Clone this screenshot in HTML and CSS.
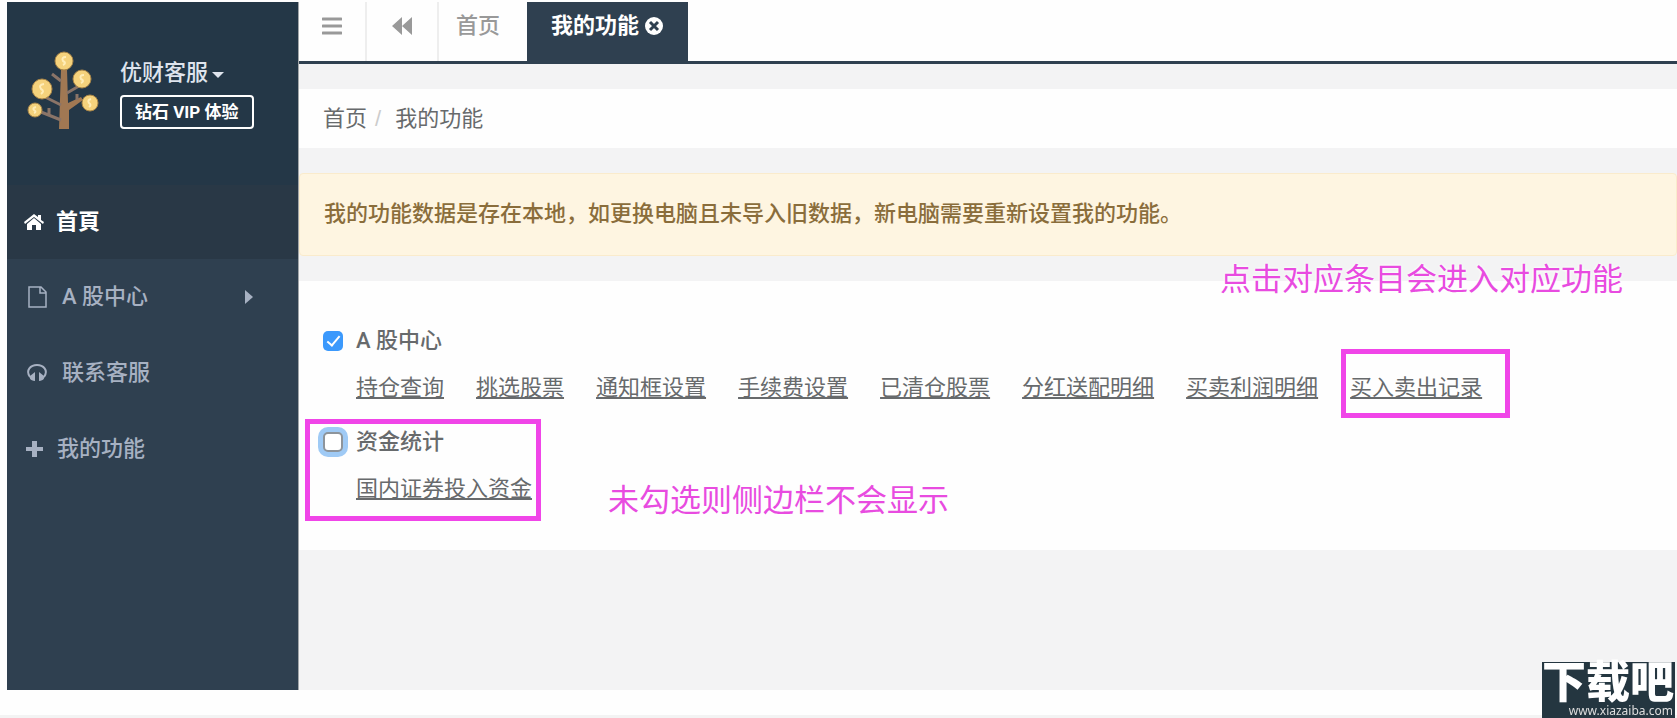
FILE: index.html
```
<!DOCTYPE html>
<html lang="zh-CN">
<head>
	<meta charset="utf-8">
	<title>我的功能</title>
	<link rel="stylesheet" href="styles.css">
</head>
<body>
	<div class="wrapper">
		<aside class="sidebar">
			<div class="profile">
				<svg class="logo" viewBox="0 0 72 80">
					<path d="M32 79 L34 19 H40 L41 53 L54 47 L56 50 L42 60 L42 79 Z" fill="#a17853"/>
					<path d="M34 31 L25 24 M40 43 L52 36 M34 55 L18 47 M34 70 L14 62 M50 50 V44 M22 64 V58" stroke="#8a7468" stroke-width="3" fill="none"/>
					<g fill="#f5d27c" stroke="#a98548" stroke-width="1">
						<circle cx="37" cy="11" r="9"/>
						<circle cx="55" cy="29" r="9"/>
						<circle cx="15" cy="39" r="10"/>
						<circle cx="63" cy="53" r="8"/>
						<circle cx="8" cy="60" r="7"/>
					</g>
					<g stroke="#ffedb8" stroke-width="2" fill="none">
						<path d="M39 7 q-5 0 -3 4 q4 2 0 4"/>
						<path d="M57 25 q-5 0 -3 4 q4 2 0 4"/>
						<path d="M17 34 q-6 1 -3 5 q4 2 0 5"/>
						<path d="M64 49 q-4 1 -2 4 q3 2 0 4"/>
						<path d="M9 57 q-4 1 -2 3 q3 2 0 3"/>
					</g>
				</svg>
				<div class="profile-info">
					<button class="user">优财客服<span class="caret"></span></button>
					<button class="vip">钻石 VIP 体验</button>
				</div>
			</div>
			<nav class="menu">
				<a class="menu-item active" href="#">
					<svg width="20" height="18" viewBox="0 0 20 18"><path d="M10 1 L0 9 L1 11 L10 4 L19 11 L20 9 L17 7 V2 H14 V4 Z M10 5 L3 11 V17 H8 V12 H12 V17 H17 V11 Z" fill="currentColor"/></svg>
					首頁
				</a>
				<a class="menu-item" href="#">
					<svg width="26" height="24" viewBox="0 0 26 24"><path d="M5 2 H17 L22 7 V22 H5 Z M16 2 V8 H22" fill="none" stroke="currentColor" stroke-width="1.5"/></svg>
					A 股中心
					<span class="arrow"></span>
				</a>
				<a class="menu-item" href="#">
					<svg width="26" height="22" viewBox="0 0 26 22"><path d="M6 15 C1 8 7 3 13 3 S25 8 20 15" fill="none" stroke="currentColor" stroke-width="2"/><path d="M11 10 V19 C6 19 5 15 6 14 Z M15 10 V19 C20 19 21 15 20 14 Z" fill="currentColor"/></svg>
					联系客服
				</a>
				<a class="menu-item" href="#">
					<svg width="21" height="18" viewBox="0 0 21 18"><path d="M8 1 H13 V7 H19 V11 H13 V17 H8 V11 H2 V7 H8 Z" fill="currentColor"/></svg>
					我的功能
				</a>
			</nav>
		</aside>

		<main class="page">
			<div class="tabs">
				<button class="tab tab-toggle" aria-label="菜单">
					<svg width="20" height="18" viewBox="0 0 20 18"><path d="M1 2 H19 M1 9 H19 M1 16 H19" stroke="currentColor" stroke-width="3" stroke-linecap="round"/></svg>
				</button>
				<button class="tab tab-back" aria-label="后退">
					<svg width="20" height="18" viewBox="0 0 20 18"><path d="M10 0 V18 L0 9 Z M20 0 V18 L10 9 Z" fill="currentColor"/></svg>
				</button>
				<button class="tab tab-home">首页</button>
				<button class="tab tab-current">我的功能
					<svg width="20" height="20" viewBox="0 0 20 20"><circle cx="10" cy="10" r="9" fill="currentColor"/><path d="M6 6 L14 14 M14 6 L6 14" stroke="#2f4050" stroke-width="3"/></svg>
				</button>
			</div>

			<div class="breadcrumb">
				<a href="#">首页</a><span class="slash">/</span><span>我的功能</span>
			</div>

			<div class="alert">我的功能数据是存在本地，如更换电脑且未导入旧数据，新电脑需要重新设置我的功能。</div>

			<section class="panel">
				<p class="note note-links">点击对应条目会进入对应功能</p>
				<div class="group">
					<label class="group-title"><input type="checkbox" checked>A 股中心</label>
					<div class="links">
						<a href="#">持仓查询</a>
						<a href="#">挑选股票</a>
						<a href="#">通知框设置</a>
						<a href="#">手续费设置</a>
						<a href="#">已清仓股票</a>
						<a href="#">分红送配明细</a>
						<a href="#">买卖利润明细</a>
						<a class="marked" href="#">买入卖出记录</a>
					</div>
				</div>
				<div class="group group-marked">
					<label class="group-title"><input class="focused" type="checkbox">资金统计</label>
					<div class="links">
						<a href="#">国内证券投入资金</a>
					</div>
					<p class="note note-check">未勾选则侧边栏不会显示</p>
				</div>
			</section>
		</main>
	</div>
	<footer class="footer"></footer>

	<div class="watermark">
		<div class="watermark-name">下载吧</div>
		<div class="watermark-url">www.xiazaiba.com</div>
	</div>
</body>
</html>
```
FILE: styles.css
```
*,
*::before,
*::after {
	box-sizing: border-box;
}
body {
	margin: 0;
	min-height: 100vh;
	display: flex;
	flex-direction: column;
	background: #fefefe;
	color: #676a6c;
	font-family: "Liberation Sans", "Noto Sans CJK SC", sans-serif;
	font-size: 22px;
	line-height: 32px;
	overflow: hidden;
}
button {
	font: inherit;
	color: inherit;
	background: none;
	border: 0;
	padding: 0;
	cursor: pointer;
}
a {
	color: inherit;
	text-decoration: none;
}
p {
	margin: 0;
}
svg {
	flex: none;
}
.wrapper {
	display: flex;
	flex: 1;
	padding: 2px 0 0 7px;
}
.footer {
	height: 3px;
	margin-top: 25px;
	background: #f3f3f3;
}

/* sidebar */
.sidebar {
	width: 292px;
	flex: none;
	background: #2f4050;
	border-right: 1px solid #a2a6a9;
	color: #a7b1c2;
	font-family: Roboto, "Noto Sans CJK SC", sans-serif;
	font-weight: 500;
}
.profile {
	display: flex;
	height: 183px;
	padding: 48px 0 0 20px;
	gap: 21px;
	background: #243747;
}
.logo {
	width: 72px;
	height: 80px;
}
.profile-info {
	display: flex;
	flex-direction: column;
	align-items: flex-start;
	gap: 6px;
	padding-top: 7px;
}
.user {
	display: flex;
	align-items: center;
	gap: 4px;
	color: #dfe4ed;
}
.caret {
	border: 6px solid transparent;
	border-top-color: #dfe4ed;
	border-bottom: 0;
	margin-top: 4px;
}
.vip {
	height: 34px;
	padding: 0 13px;
	border: 2px solid #fff;
	border-radius: 4px;
	color: #fff;
	font-size: 17px;
	font-weight: bold;
	line-height: 28px;
}
.menu-item {
	display: flex;
	align-items: center;
	gap: 12px;
	height: 76px;
	padding: 0 45px 0 17px;
}
.menu-item.active {
	height: 74px;
	background: #293846;
	color: #fff;
	font-weight: bold;
}
.arrow {
	margin-left: auto;
	border: 7px solid transparent;
	border-left: 8px solid #a7b1c2;
	border-right: 0;
}

/* content */
.page {
	flex: 1;
	min-width: 0;
	background: #f3f3f4;
}
.tabs {
	display: flex;
	height: 62px;
	background: #fefefe;
	border-bottom: 3px solid #2f4050;
	color: #999;
}
.tab {
	display: flex;
	align-items: center;
	justify-content: center;
	padding-bottom: 12px;
	border-right: 2px solid #eee;
}
.tab-toggle {
	width: 68px;
}
.tab-back {
	width: 72px;
}
.tab-home {
	padding: 0 27px 12px 17px;
	border: 0;
	font-weight: 500;
}
.tab-current {
	gap: 5px;
	padding: 0 24px 12px;
	border: 0;
	background: #2f4050;
	color: #fff;
	font-weight: bold;
}
.breadcrumb {
	display: flex;
	align-items: center;
	height: 59px;
	margin-top: 25px;
	padding: 0 24px;
	background: #fefefe;
}
.slash {
	padding: 0 14px 0 8px;
	color: #ccc;
}
.alert {
	margin: 25px 0;
	padding: 24px 24px 25px;
	border: 1px solid #faebcc;
	border-radius: 4px;
	background: #fef5e1;
	color: #8a6d3b;
	font-weight: 500;
}
.panel {
	position: relative;
	padding: 44px 24px 45px;
	background: #fefefe;
}
.group {
	position: relative;
	margin-bottom: 22px;
}
.group:last-child {
	margin-bottom: 0;
}
.group-title {
	display: flex;
	align-items: center;
	gap: 13px;
	font-family: Roboto, "Noto Sans CJK SC", sans-serif;
	font-weight: 500;
}
.group-title input {
	appearance: none;
	width: 20px;
	height: 20px;
	margin: 0;
	border: 2px solid #8d949b;
	border-radius: 5px;
	background: #fff;
}
.group-title input:checked {
	border: 0;
	background: #3b99fc;
}
.group-title input:checked::before {
	content: "";
	display: block;
	width: 7px;
	height: 13px;
	margin: 2px 0 0 7px;
	border: solid #fff;
	border-width: 0 2px 2px 0;
	transform: rotate(40deg);
}
.group-title input.focused {
	box-shadow: 0 0 0 5px #9fcaf5;
}
.links {
	display: flex;
	gap: 32px;
	margin-top: 15px;
	padding-left: 33px;
	white-space: nowrap;
}
.links a {
	text-decoration: underline;
	text-underline-offset: 2px;
	text-decoration-thickness: 2px;
	text-decoration-skip-ink: none;
}

/* pink markers and notes lying over the page */
.marked {
	position: relative;
}
.marked::after,
.group-marked::after {
	content: "";
	position: absolute;
	border: 5px solid #f045e8;
	pointer-events: none;
}
.marked::after {
	inset: -23px -28px -14px -9px;
}
.group-marked::after {
	top: -7px;
	left: -18px;
	width: 236px;
	height: 102px;
}
.note {
	position: absolute;
	color: #e84be0;
	font-size: 31px;
	line-height: 40px;
	white-space: nowrap;
	text-shadow: 0 0 3px #fff, 0 0 3px #fff;
}
.note-links {
	top: -21px;
	right: 54px;
}
.note-check {
	top: 55px;
	left: 285px;
}
.watermark {
	position: fixed;
	right: 2px;
	bottom: 0;
	width: 133px;
	height: 56px;
	background: #243640;
	color: #fff;
	white-space: nowrap;
}
.watermark-name {
	height: 42px;
	font-size: 44px;
	font-weight: 900;
	line-height: 42px;
}
.watermark-url {
	padding-right: 2px;
	color: #ddd;
	font-family: "Noto Sans", sans-serif;
	font-size: 12px;
	line-height: 14px;
	text-align: right;
}
```
